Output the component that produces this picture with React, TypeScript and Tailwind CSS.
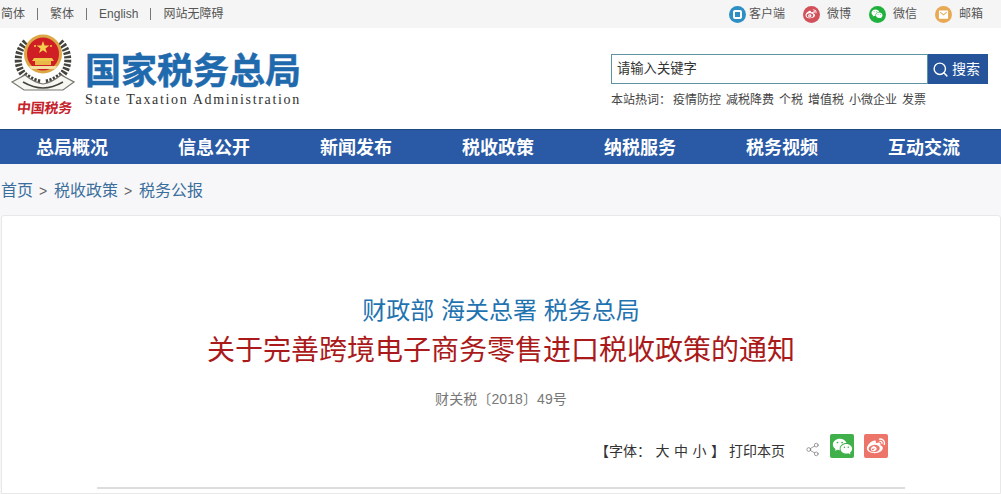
import React from 'react';
import { Search, Share2 } from 'lucide-react';
import { RiWechatFill, RiWeiboFill, RiMailFill } from 'react-icons/ri';

const cjk = "font-['Liberation_Sans','Noto_Sans_CJK_SC',sans-serif]";
const navItems = ['总局概况', '信息公开', '新闻发布', '税收政策', '纳税服务', '税务视频', '互动交流'];
const hotWords = ['疫情防控', '减税降费', '个税', '增值税', '小微企业', '发票'];

// 税徽，只画大致形状
const Emblem = () => (
  <div className="flex w-[64px] shrink-0 flex-col items-center">
    <svg width="64" height="60" viewBox="0 0 64 60">
      <path d="M15 9C5 18 5 34 13 42c5 4 10 7 16 8" fill="none" stroke="#44443c" strokeWidth="7" strokeDasharray="2.5 1.5" />
      <path d="M49 9c10 9 10 25 2 33-5 4-10 7-16 8" fill="none" stroke="#44443c" strokeWidth="7" strokeDasharray="2.5 1.5" />
      <ellipse cx="32" cy="21" rx="17.5" ry="18" fill="#cf1f24" stroke="#dca846" strokeWidth="3" />
      <polygon points="32,8 33.6,12.6 38.4,12.6 34.5,15.5 36,20 32,17.3 28,20 29.5,15.5 25.6,12.6 30.4,12.6" fill="#f4d04e" />
      <circle cx="24" cy="13" r="1" fill="#f4d04e" />
      <circle cx="40" cy="13" r="1" fill="#f4d04e" />
      <path d="M23 25h18l2 3H21Z" fill="#f0c64a" />
      <rect x="24" y="28" width="16" height="4" fill="#e9b945" />
      <path d="M18 33h28l-2 3H20Z" fill="#f3e0a0" />
      <path d="M1 49 14 42c6 5 12 8 18 9 6-1 12-4 18-9l13 7-11 8H13Z" fill="#f6f6f2" stroke="#77776f" strokeWidth="1.2" />
      <path d="M12 49c7 4 13 6 20 6s13-2 20-6" fill="none" stroke="#44443c" strokeWidth="1.5" />
    </svg>
    <div className="ml-[3px] mt-[6px] -skew-x-6 whitespace-nowrap text-[14px] font-bold leading-[18px] tracking-[-0.2px] text-[#c4232b]">中国税务</div>
  </div>
);

const TopLink = ({ label, icon, color, gap }: { label: string; icon: React.ReactNode; color: string; gap: string }) => (
  <div className={`flex items-center ${gap}`}>
    <span className={`flex h-[17px] w-[17px] items-center justify-center rounded-full text-white ${color}`}>{icon}</span>
    <span>{label}</span>
  </div>
);

export default function App() {
  return (
    <div className={`h-[494px] w-[1001px] overflow-hidden bg-white ${cjk}`}>
      <div className="flex h-[28px] items-center justify-between bg-[#f5f5f5] pl-px pr-[18px] text-[12px] text-[#555]">
        <div className="flex items-center">
          <span>简体</span>
          <span className="mx-[12px] h-[12px] w-px bg-[#777]" />
          <span>繁体</span>
          <span className="mx-[12px] h-[12px] w-px bg-[#777]" />
          <span>English</span>
          <span className="mx-[12px] h-[12px] w-px bg-[#777]" />
          <span>网站无障碍</span>
        </div>
        <div className="flex items-center gap-[18px]">
          <TopLink label="客户端" gap="gap-[3px]" color="bg-[#2d8fc4]" icon={<span className="h-[9px] w-[9px] rounded-[2px] border-2 border-white" />} />
          <TopLink label="微博" gap="gap-[7px]" color="bg-[#d2505a]" icon={<RiWeiboFill size={12} />} />
          <TopLink label="微信" gap="gap-[7px]" color="bg-[#1fb13c]" icon={<RiWechatFill size={12} />} />
          <TopLink label="邮箱" gap="gap-[7px]" color="bg-[#e8a955]" icon={<RiMailFill size={11} />} />
        </div>
      </div>

      <div className="flex h-[101px] justify-between pr-[13px]">
        <div className="flex pl-[11px] pt-[5px]">
          <Emblem />
          <div className="ml-[10px] pt-[19px]">
            <div className="text-[36px] font-bold leading-[40px] text-[#1f69ad] [-webkit-text-stroke:0.5px_#1f69ad]">国家税务总局</div>
            <div className="font-['Liberation_Serif',serif] text-[14px] leading-[16px] tracking-[1.67px] text-[#333]">
              State Taxation Administration
            </div>
          </div>
        </div>
        <div className="pt-[26px]">
          <div className="flex h-[30px] w-[377px]">
            <div className="flex flex-1 items-center border border-[#5e93a0] pl-[5px] text-[13.3px] text-[#333]">请输入关键字</div>
            <div className="flex w-[60px] items-center justify-center gap-[3px] bg-[#25549b] pr-[4px] text-[14px] text-white">
              <Search size={17} strokeWidth={2} />
              <span>搜索</span>
            </div>
          </div>
          <div className="mt-[7px] flex gap-[5px] text-[12px] leading-[18px] text-[#444]">
            <span className="mr-[-3px]">本站热词：</span>
            {hotWords.map(w => <span key={w}>{w}</span>)}
          </div>
        </div>
      </div>

      <div className="flex h-[35px] items-center gap-[70px] border-t border-[#1d4a80] bg-[#2a5aa5] pl-[36px] pt-[2px] text-[18px] font-bold text-white">
        {navItems.map(n => <span key={n} className="w-[72px] whitespace-nowrap">{n}</span>)}
      </div>

      <div className="h-[330px] bg-[#f7f7f9] pt-[17px]">
        <div className="flex items-center gap-[6px] pl-px text-[16px] leading-[20px] text-[#3a6e9c]">
          <span>首页</span>
          <span className="w-[9px] text-[14px] text-[#666]">&gt;</span>
          <span>税收政策</span>
          <span className="w-[9px] text-[14px] text-[#666]">&gt;</span>
          <span>税务公报</span>
        </div>
        <div className="ml-[1px] mt-[14px] h-[279px] rounded-t-[3px] border border-[#e8e8e8] bg-white pt-[80px]">
          <div className="text-center text-[24px] leading-[30px] text-[#1f73b0]">财政部 海关总署 税务总局</div>
          <div className="mt-[7px] text-center text-[28px] leading-[36px] text-[#aa1a1a]">关于完善跨境电子商务零售进口税收政策的通知</div>
          <div className="mt-[20px] text-center text-[14px] leading-[20px] tracking-[0.1px] text-[#777]">财关税〔2018〕49号</div>
          <div className="mt-[25px] flex justify-end pr-[112px] text-[14px] text-[#333]">
            <div className="mr-[4px] mt-[7px] flex gap-[4.5px] leading-[20px]">
              <span>【字体：</span>
              <span>大</span>
              <span>中</span>
              <span>小</span>
              <span>】</span>
            </div>
            <span className="mr-[20px] mt-[7px] leading-[20px]">打印本页</span>
            <Share2 size={15} strokeWidth={1} className="mr-[10px] mt-[8px] text-[#666]" />
            <span className="mr-[10px] flex h-[24px] w-[24px] items-center justify-center rounded-[2px] bg-[#3fb04a] text-white"><RiWechatFill size={21} /></span>
            <span className="flex h-[24px] w-[24px] items-center justify-center rounded-[2px] bg-[#ec7468] text-white"><RiWeiboFill size={20} /></span>
          </div>
          <div className="mx-[95px] mt-[26px] h-[2px] bg-[#ddd]" />
        </div>
      </div>
    </div>
  );
}
